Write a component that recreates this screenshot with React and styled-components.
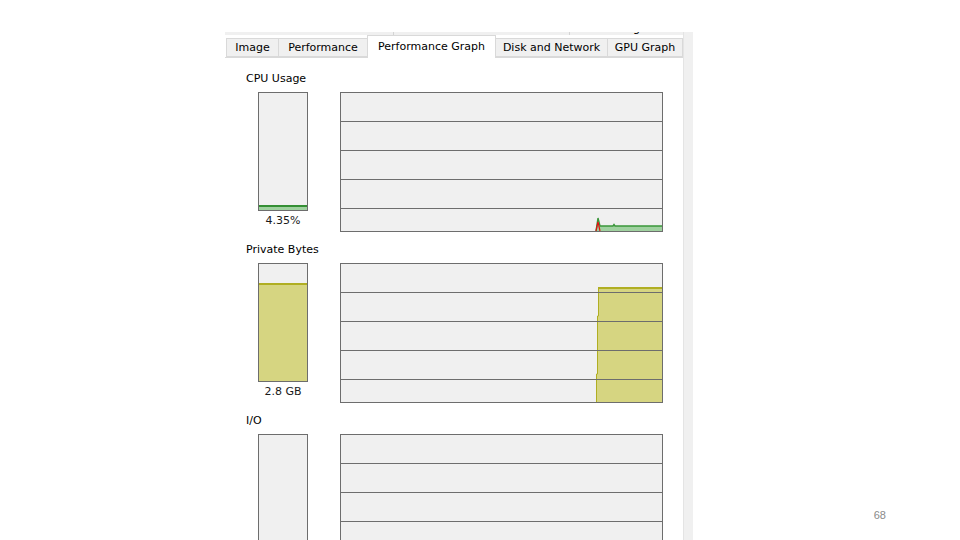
import React from "react";
import styled, { createGlobalStyle } from "styled-components";

const Global = createGlobalStyle`
  html, body { margin: 0; padding: 0; background: #ffffff; }
  body { font-family: "DejaVu Sans", "Liberation Sans", sans-serif; }
`;

const Screen = styled.div`
  box-sizing: border-box;
  width: 960px;
  height: 540px;
  overflow: hidden;
  display: flex;
  padding: 32px 0 0 225px;
  background: #ffffff;
`;

const Window = styled.div`
  display: flex;
  width: 468px;
  height: 508px;
  flex-shrink: 0;
`;

const Main = styled.div`
  width: 458px;
  display: flex;
  flex-direction: column;
`;

const Side = styled.div`
  box-sizing: border-box;
  width: 10px;
  background: #f0f0f0;
  border-left: 1px solid #e4e4e4;
`;

const TopStrip = styled.div`
  display: flex;
  height: 3px;
  background: #f0f0f0;
`;

const StripCell = styled.div`
  box-sizing: border-box;
  width: ${(p) => p.$w}px;
  flex: ${(p) => (p.$w ? "none" : "1")};
  height: 3px;
  overflow: hidden;
  border-right: ${(p) => (p.$last ? "none" : "1px solid #d4d4d4")};
  font-size: 11px;
  line-height: 13px;
  text-align: center;
  color: #000;
`;

const StripText = styled.div`
  margin-top: -10px;
`;

const TabBar = styled.div`
  box-sizing: border-box;
  height: 23px;
  display: flex;
  align-items: flex-end;
  padding-left: 1px;
  border-bottom: 1px solid #d9d9d9;
  background: #ffffff;
`;

const Tab = styled.div`
  box-sizing: border-box;
  position: relative;
  z-index: ${(p) => (p.$active ? 2 : 1)};
  width: ${(p) => p.$w + 1}px;
  margin-right: -1px;
  height: ${(p) => (p.$active ? 23 : 19)}px;
  margin-bottom: ${(p) => (p.$active ? -1 : 0)}px;
  padding-top: ${(p) => (p.$active ? 0 : 1)}px;
  padding-bottom: ${(p) => (p.$active ? 1 : 0)}px;
  background: ${(p) => (p.$active ? "#ffffff" : "#f0f0f0")};
  border: 1px solid #d9d9d9;
  border-bottom: ${(p) => (p.$active ? "none" : "1px solid #d9d9d9")};
  font-size: 11px;
  line-height: ${(p) => (p.$active ? 21 : 16)}px;
  text-align: center;
  color: #000;
  white-space: nowrap;
`;

const Panel = styled.div`
  flex: 1;
  background: #ffffff;
  padding: 14px 0 0 21px;
  display: flex;
  flex-direction: column;
  gap: 11px;
`;

const Section = styled.div`
  display: flex;
  flex-direction: column;
`;

const Label = styled.div`
  height: 14px;
  font-size: 11px;
  line-height: 14px;
  color: #000;
`;

const Row = styled.div`
  display: flex;
  margin: 6px 0 0 12px;
  align-items: flex-start;
`;

const MeterCol = styled.div`
  width: 50px;
  display: flex;
  flex-direction: column;
`;

const Meter = styled.div`
  box-sizing: border-box;
  width: 50px;
  height: 119px;
  border: 1px solid #6d6d6d;
  background: #f0f0f0;
  display: flex;
  flex-direction: column;
  justify-content: flex-end;
`;

const Fill = styled.div`
  box-sizing: border-box;
  background: ${(p) => p.$fill};
  border-top: 2px solid ${(p) => p.$line};
`;

const Value = styled.div`
  margin-top: 3px;
  font-size: 11px;
  line-height: 14px;
  text-align: center;
  color: #1a1a1a;
`;

const Chart = styled.div`
  box-sizing: border-box;
  position: relative;
  margin-left: 32px;
  width: 323px;
  height: 140px;
  border: 1px solid #6d6d6d;
  background: #f0f0f0;
  overflow: hidden;

  &::after {
    content: "";
    position: absolute;
    inset: 0;
    pointer-events: none;
    background: repeating-linear-gradient(
      to bottom,
      transparent 0 28px,
      #6d6d6d 28px 29px
    );
  }
`;

const Plot = styled.svg`
  position: absolute;
  left: 0;
  top: 0;
  display: block;
`;

const SlideNumber = styled.div`
  align-self: flex-end;
  margin: 0 74px 18px auto;
  font-family: "Liberation Sans", "DejaVu Sans", sans-serif;
  font-size: 11px;
  line-height: 14px;
  color: #8a8a8a;
`;

const tabs = [
  { label: "Image", w: 52 },
  { label: "Performance", w: 89 },
  { label: "Performance Graph", w: 128, active: true },
  { label: "Disk and Network", w: 112 },
  { label: "GPU Graph", w: 75 },
];

function CpuPlot() {
  return (
    <Plot width="321" height="138" viewBox="0 0 321 138">
      <polygon points="256,138 256,133 321,133 321,138" fill="#9fd19f" />
      <polyline
        points="255,138 257,125 259,133 272,133 273,131.5 274,133 321,133"
        fill="none"
        stroke="#3a963a"
        strokeWidth="1.4"
      />
      <polyline
        points="255,138 257,129 259,138"
        fill="none"
        stroke="#e01010"
        strokeWidth="1.2"
      />
    </Plot>
  );
}

function BytesPlot() {
  return (
    <Plot width="321" height="138" viewBox="0 0 321 138">
      <polygon
        points="257,24 321,24 321,138 255,138 255,110 256,110 256,52 257,52"
        fill="#d6d581"
      />
      <line x1="257" y1="24" x2="321" y2="24" stroke="#b0ae22" strokeWidth="2" />
      <polyline
        points="257.5,24 257.5,52 256.5,52 256.5,110 255.5,110 255.5,138"
        fill="none"
        stroke="#b0ae22"
        strokeWidth="1"
      />
    </Plot>
  );
}

function GraphSection({ title, value, pct, fill, line, plot }) {
  return (
    <Section>
      <Label>{title}</Label>
      <Row>
        <MeterCol>
          <Meter>
            {pct != null && (
              <Fill
                $fill={fill}
                $line={line}
                style={{ height: `${Math.max(4, (117 * pct) / 100)}px` }}
              />
            )}
          </Meter>
          {value && <Value>{value}</Value>}
        </MeterCol>
        <Chart>{plot}</Chart>
      </Row>
    </Section>
  );
}

export default function App() {
  return (
    <>
      <Global />
      <Screen>
        <Window>
          <Main>
            <TopStrip>
              <StripCell $w={169} />
              <StripCell $w={176} />
              <StripCell $last>
                <StripText>Strings</StripText>
              </StripCell>
            </TopStrip>
            <TabBar>
              {tabs.map((t) => (
                <Tab key={t.label} $w={t.w} $active={t.active}>
                  {t.label}
                </Tab>
              ))}
            </TabBar>
            <Panel>
              <GraphSection
                title="CPU Usage"
                value="4.35%"
                pct={4.35}
                fill="#9fd19f"
                line="#348f34"
                plot={<CpuPlot />}
              />
              <GraphSection
                title="Private Bytes"
                value="2.8 GB"
                pct={84}
                fill="#d6d581"
                line="#b0ae22"
                plot={<BytesPlot />}
              />
              <GraphSection title="I/O" />
            </Panel>
          </Main>
          <Side />
        </Window>
        <SlideNumber>68</SlideNumber>
      </Screen>
    </>
  );
}
